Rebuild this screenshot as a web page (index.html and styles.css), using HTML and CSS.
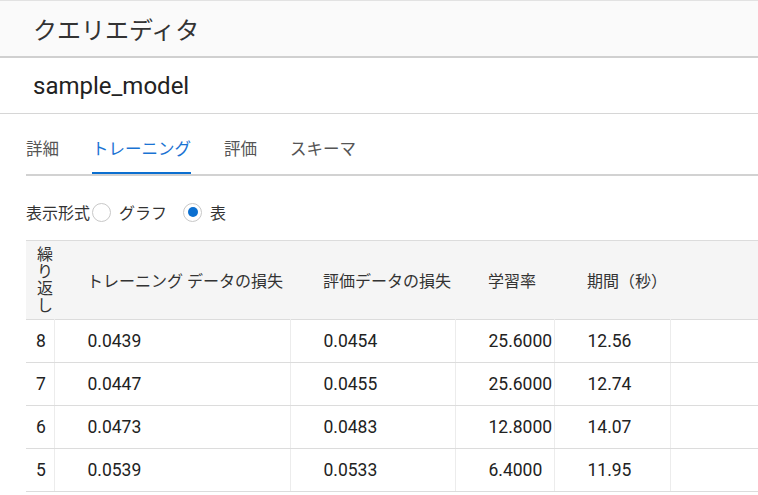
FILE: index.html
```html
<!DOCTYPE html>
<html lang="ja">
<head>
<meta charset="utf-8">
<link rel="stylesheet" href="styles.css">
</head>
<body>
<header class="appbar">クエリエディタ</header>
<div class="model">sample_model</div>
<main class="content">
  <nav class="tabs">
    <span class="tab">詳細</span>
    <span class="tab active">トレーニング</span>
    <span class="tab">評価</span>
    <span class="tab">スキーマ</span>
  </nav>
  <div class="format">
    <span class="format-label">表示形式</span>
    <label class="radio"><span class="circle"></span>グラフ</label>
    <label class="radio"><span class="circle checked"></span>表</label>
  </div>
  <table class="grid">
    <colgroup>
      <col class="c-iter"><col class="c-train"><col class="c-eval"><col class="c-rate"><col class="c-dur"><col class="c-rest">
    </colgroup>
    <thead>
      <tr>
        <th class="iter">繰り返し</th>
        <th>トレーニング データの損失</th>
        <th>評価データの損失</th>
        <th>学習率</th>
        <th>期間（秒）</th>
        <th></th>
      </tr>
    </thead>
    <tbody>
      <tr><td class="iter">8</td><td>0.0439</td><td>0.0454</td><td>25.6000</td><td>12.56</td><td></td></tr>
      <tr><td class="iter">7</td><td>0.0447</td><td>0.0455</td><td>25.6000</td><td>12.74</td><td></td></tr>
      <tr><td class="iter">6</td><td>0.0473</td><td>0.0483</td><td>12.8000</td><td>14.07</td><td></td></tr>
      <tr><td class="iter">5</td><td>0.0539</td><td>0.0533</td><td>6.4000</td><td>11.95</td><td></td></tr>
    </tbody>
  </table>
</main>
</body>
</html>
```
FILE: styles.css
```css
html, body {
  margin: 0;
  padding: 0;
  background: #fff;
}
body {
  font-family: Roboto, "Noto Sans CJK JP", sans-serif;
  color: #222;
  overflow: hidden;
}
.appbar {
  display: flex;
  align-items: center;
  height: 55px;
  padding-left: 33px;
  border-top: 1px solid #e2e2e2;
  border-bottom: 2px solid #d0d0d0;
  background: #fafafa;
  font-size: 24px;
  color: #333;
}
.model {
  display: flex;
  align-items: center;
  height: 55px;
  padding-left: 33px;
  border-bottom: 1px solid #d6d6d6;
  font-size: 24px;
  color: #222;
}
.content {
  padding-left: 26px;
}
.tabs {
  display: flex;
  gap: 33px;
  padding-top: 24px;
  border-bottom: 2px solid #d2d2d2;
}
.tab {
  font-size: 16.5px;
  line-height: 24px;
  padding-bottom: 10px;
  border-bottom: 2px solid transparent;
  color: #555;
}
.tab.active {
  color: #1a73d3;
  border-bottom-color: #0b6fd0;
}
.format {
  display: flex;
  align-items: center;
  margin-top: 24px;
  height: 24px;
  font-size: 16px;
  color: #333;
}
.format-label {
  margin-right: 2px;
}
.radio {
  display: flex;
  align-items: center;
  margin-right: 16px;
}
.circle {
  width: 17px;
  height: 17px;
  border: 1px solid #c8c8c8;
  border-radius: 50%;
  margin-right: 8px;
  display: flex;
  align-items: center;
  justify-content: center;
}
.circle.checked::after {
  content: "";
  width: 10px;
  height: 10px;
  border-radius: 50%;
  background: #0b6fd0;
}
.grid {
  margin-top: 16px;
  width: 732px;
  border-collapse: collapse;
  table-layout: fixed;
  font-size: 16px;
}
.c-iter { width: 28px; }
.c-train { width: 236px; }
.c-eval { width: 165px; }
.c-rate { width: 99px; }
.c-dur { width: 116px; }
.grid thead tr {
  background: #f5f5f5;
  border-top: 1px solid #dcdcdc;
  border-bottom: 1px solid #dcdcdc;
}
.grid th {
  height: 78px;
  padding: 0 0 0 33px;
  text-align: left;
  font-weight: normal;
  color: #333;
  vertical-align: middle;
  white-space: nowrap;
}
.grid th.iter {
  padding: 0 0 0 11px;
  white-space: normal;
  line-height: 17px;
  font-size: 16px;
}
.grid td {
  height: 42px;
  padding: 0 0 0 33px;
  border-bottom: 1px solid #dcdcdc;
  border-left: 1px solid #ececec;
  font-size: 17.5px;
  color: #222;
  white-space: nowrap;
}
.grid td.iter {
  padding-left: 10px;
  border-left: none;
}
```
